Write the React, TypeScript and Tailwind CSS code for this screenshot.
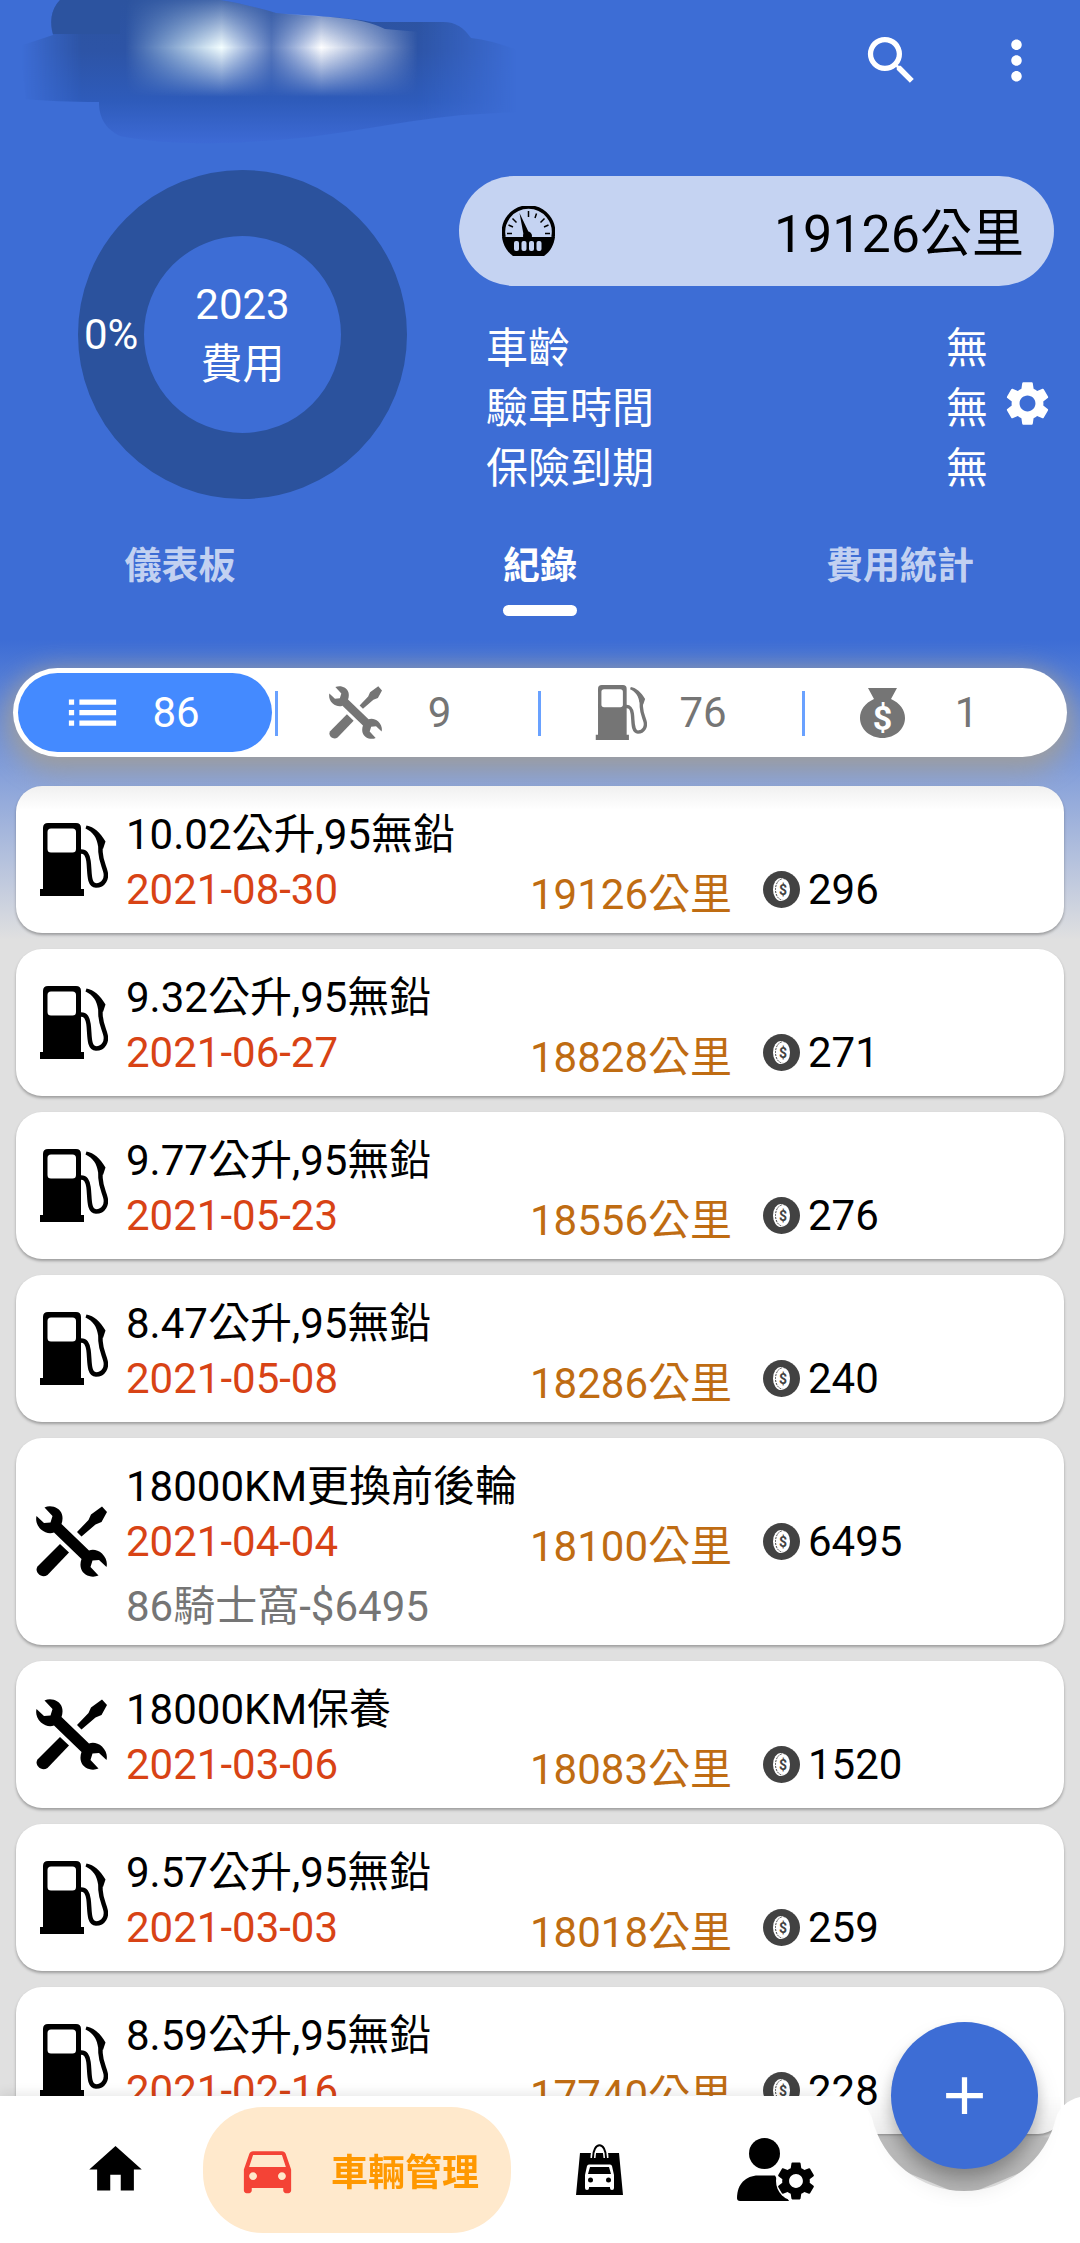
import React, { useState } from 'react';
import {
  MdAdd,
  MdDirectionsCar,
  MdHome,
  MdList,
  MdMoreVert,
  MdSearch,
  MdSettings,
} from 'react-icons/md';

type RecordType = 'fuel' | 'repair';

const records: {
  type: RecordType;
  title: string;
  date: string;
  km: string;
  price: string;
  note?: string;
}[] = [
  { type: 'fuel', title: '10.02公升,95無鉛', date: '2021-08-30', km: '19126公里', price: '296' },
  { type: 'fuel', title: '9.32公升,95無鉛', date: '2021-06-27', km: '18828公里', price: '271' },
  { type: 'fuel', title: '9.77公升,95無鉛', date: '2021-05-23', km: '18556公里', price: '276' },
  { type: 'fuel', title: '8.47公升,95無鉛', date: '2021-05-08', km: '18286公里', price: '240' },
  { type: 'repair', title: '18000KM更換前後輪', date: '2021-04-04', km: '18100公里', price: '6495', note: '86騎士窩-$6495' },
  { type: 'repair', title: '18000KM保養', date: '2021-03-06', km: '18083公里', price: '1520' },
  { type: 'fuel', title: '9.57公升,95無鉛', date: '2021-03-03', km: '18018公里', price: '259' },
  { type: 'fuel', title: '8.59公升,95無鉛', date: '2021-02-16', km: '17740公里', price: '228' },
];

const carInfo = [
  { label: '車齡', value: '無' },
  { label: '驗車時間', value: '無' },
  { label: '保險到期', value: '無' },
];

const tabs = ['儀表板', '紀錄', '費用統計'];

function PumpIcon({ className }: { className?: string }) {
  return (
    <svg viewBox="-5 0 73 73" className={className} fill="currentColor">
      <path
        fillRule="evenodd"
        d="M8 0H36Q41 0 41 5V66H44V73H0V66H3V5Q3 0 8 0ZM11 5.500Q7.500 5.500 7.500 9V26Q7.500 29.500 11 29.500H32.500Q36 29.500 36 26V9Q36 5.500 32.500 5.500Z"
      />
      <path
        d="M40 28.500C46 28 47.500 32 48.500 38C50 48 48 62 56 62.500C64 62.500 67 55 65.500 49C64 43 61 38 60.500 29C60.500 25 60.500 22 60 18"
        fill="none"
        stroke="currentColor"
        strokeWidth="4.500"
      />
      <path d="M46.500 2.500C54 4 60 9 65.500 18.500L63 26L58 23C57 15 53 9 45.500 5.500Z" />
    </svg>
  );
}

function ToolsIcon({ className }: { className?: string }) {
  return (
    <svg viewBox="0 0 71 71" className={className} fill="currentColor">
      <path d="M0.500 10L8 17L14.500 16.500L16.500 10L8.500 1.500C15 -1.500 24 1.500 26 8.500C27 12 26.500 15 25.500 18L53 44.500C57 43 62 44 66 47.500C70.500 52 71.500 57 70.500 61L63 54L56.500 54.500L54.500 61L62.500 69.500C56 72.500 47 69.500 45 62.500C44 59 44.500 56 45.500 53L18 26.500C14 28 9 27 5 23.500C0.500 19 -0.500 14 0.500 10Z" />
      <path d="M24 38L33 46.500L11.500 69C5 73 -2 66 1.500 60.500Z" />
      <path d="M41 26L52.500 14L55 8.500L66 0.500L71 6L65.500 16L59.500 18.500L45.500 30.500Z" />
    </svg>
  );
}

function MoneyBagIcon({ className }: { className?: string }) {
  return (
    <svg viewBox="0 0 45 50" className={className} fill="currentColor">
      <path d="M8 0H37L31 11C40 15 45 22 45 30C45 41 35 50 22.500 50S0 41 0 30C0 22 5 15 14 11Z" />
      <text x="22.500" y="42" textAnchor="middle" fontSize="34" fill="#fff" className="font-bold">
        $
      </text>
    </svg>
  );
}

function CoinIcon({ className }: { className?: string }) {
  return (
    <svg viewBox="0 0 37 37" className={className}>
      <circle cx="18.500" cy="18.500" r="18.500" fill="#424242" />
      <ellipse cx="18" cy="18.500" rx="8" ry="11.500" fill="#fff" />
      <ellipse cx="19.500" cy="18.500" rx="7" ry="10.500" fill="none" stroke="#424242" strokeWidth="1" strokeDasharray="2 1" />
      <ellipse cx="20.500" cy="18.500" rx="6.500" ry="10.500" fill="#fff" />
      <text x="20" y="23.500" textAnchor="middle" fontSize="14" fill="#424242" className="font-bold">
        $
      </text>
    </svg>
  );
}

function OdometerIcon({ className }: { className?: string }) {
  return (
    <svg viewBox="0 0 53 50" className={className}>
      <path d="M2 31A25 25 0 1 1 51 31" fill="none" stroke="#000" strokeWidth="3.500" />
      <path d="M0 31H53C52 38 49 45 42 50H11C4 45 1 38 0 31Z" />
      <path
        d="M5 27.500H10M43 27.500H48M6.500 19L11 21M46.500 19L42 21M10.500 12.500L14.500 16.500M42.500 12.500L38.500 16.500M34.500 7.500L33 12M26.500 5V11"
        stroke="#000"
        strokeWidth="1.500"
      />
      <path d="M17.500 7L28 29L22 31Z" />
      <circle cx="25.500" cy="30" r="4.500" />
      <g fill="#c5d3f2">
        <rect x="12" y="35" width="5" height="10" rx="2" />
        <rect x="19.500" y="35" width="5" height="10" rx="2" />
        <rect x="27" y="35" width="5" height="10" rx="2" />
        <rect x="34.500" y="35" width="5" height="10" rx="2" />
      </g>
    </svg>
  );
}

function CarBagIcon({ className }: { className?: string }) {
  return (
    <svg viewBox="0 0 47 51" className={className}>
      <path d="M4 9H43L47 51H0Z" />
      <path d="M17 14C17 -3 30 -3 30 14" fill="none" stroke="#fff" strokeWidth="5" />
      <path d="M17 14C17 -3 30 -3 30 14" fill="none" stroke="#000" strokeWidth="2" />
      <path
        fillRule="evenodd"
        fill="#fff"
        d="M13 20.500H34Q35.500 20.500 36 22L38 31V44Q38 46 36 46T34 44V43H13V44Q13 46 11 46T9 44V31L11 22Q11.500 20.500 13 20.500ZM14 23L12 30H35L33 23Z"
      />
      <circle cx="14.500" cy="36" r="2.500" />
      <circle cx="32.500" cy="36" r="2.500" />
    </svg>
  );
}

function UserGearIcon({ className }: { className?: string }) {
  return (
    <svg viewBox="0 0 78 63" className={className}>
      <circle cx="27.500" cy="15.500" r="15.500" />
      <path d="M0 60C0 46 9 37.500 21 37.500H38L52 63H3Q0 63 0 60Z" />
      <circle cx="59" cy="43" r="20" fill="#fff" />
      <MdSettings x="36" y="20" size={46} />
    </svg>
  );
}

/* Brushed-over account name in the app bar */
function HiddenName() {
  return (
    <svg viewBox="0 0 540 160" className="absolute left-0 top-0 h-[160px] w-[540px]" aria-hidden="true">
      <defs>
        <linearGradient id="brush" x1="0" y1="0" x2="0" y2="1">
          <stop offset="0" stopColor="#2c539f" />
          <stop offset="0.350" stopColor="#2d54a6" />
          <stop offset="0.700" stopColor="#2e5bba" />
          <stop offset="1" stopColor="#3d6ad5" />
        </linearGradient>
        <linearGradient id="sides" gradientUnits="userSpaceOnUse" x1="22" y1="0" x2="516" y2="0">
          <stop offset="0" stopColor="#000" />
          <stop offset="0.120" stopColor="#fff" />
          <stop offset="0.800" stopColor="#fff" />
          <stop offset="1" stopColor="#000" />
        </linearGradient>
        <linearGradient id="glowX" gradientUnits="userSpaceOnUse" x1="125" y1="0" x2="418" y2="0">
          <stop offset="0" stopColor="#dff" stopOpacity="0" />
          <stop offset="0.330" stopColor="#f4ffff" />
          <stop offset="0.500" stopColor="#dde8ff" stopOpacity="0.250" />
          <stop offset="0.670" stopColor="#fff" />
          <stop offset="1" stopColor="#fff" stopOpacity="0" />
        </linearGradient>
        <linearGradient id="glowY" gradientUnits="userSpaceOnUse" x1="0" y1="0" x2="0" y2="97">
          <stop offset="0" stopColor="#222" />
          <stop offset="0.490" stopColor="#fff" />
          <stop offset="1" stopColor="#000" />
        </linearGradient>
        <mask id="fadeSides">
          <rect width="540" height="160" fill="url(#sides)" />
        </mask>
        <mask id="fadeGlow">
          <rect width="540" height="97" fill="url(#glowY)" />
        </mask>
        <clipPath id="brushTop">
          <path d="M0 0H220C240 3 262 9 276 13C320 17 360 16 385 29L420 32V97H0Z" />
        </clipPath>
      </defs>
      <path
        mask="url(#fadeSides)"
        fill="url(#brush)"
        d="M60 0H220C240 3 262 9 276 13C310 17 340 16 372 22H443C456 22 464 28 471 38Q495 41 516 50V112L462 115C390 122 330 138 260 141C200 146 150 142 120 136C104 128 99 116 99 102C70 102 45 101 26 99L20 46L53 35C50 24 50 10 60 0Z"
      />
      <path d="M60 0H120V34H53C50 24 50 10 60 0Z" fill="#2c539f" />
      <g clipPath="url(#brushTop)">
        <rect x="125" width="293" height="97" fill="url(#glowX)" mask="url(#fadeGlow)" />
      </g>
    </svg>
  );
}

function RecordCard({ record }: { record: (typeof records)[number] }) {
  return (
    <li className="flex items-center rounded-[26px] bg-white shadow-[0_2px_3px_rgba(0,0,0,0.3)] first:bg-linear-to-b first:from-[#f0f0f0] first:to-white first:to-[24px]">
      <div className="flex w-[110px] shrink-0 justify-center">
        {record.type === 'fuel' ? <PumpIcon className="size-[73px]" /> : <ToolsIcon className="size-[71px]" />}
      </div>
      <div className="flex-1 pb-4 pt-[21px]">
        <h2 className="leading-[55px]">{record.title}</h2>
        <div className="grid h-[55px] grid-cols-[404fr_233fr_301fr] items-start leading-[55px]">
          <time className="text-[#d84315]">{record.date}</time>
          <span className="pt-[5px] text-[#bf6c12]">{record.km}</span>
          <span className="flex items-center gap-2">
            <CoinIcon className="size-[37px]" />
            {record.price}
          </span>
        </div>
        {record.note && <p className="mt-4 leading-[44px] text-[#757575]">{record.note}</p>}
      </div>
    </li>
  );
}

function BottomNav() {
  return (
    <nav className="fixed inset-x-0 bottom-0 h-[147px]">
      {/* bar with the notch for the add button */}
      <div className="absolute inset-0 flex">
        <div className="flex-1 bg-white shadow-[0_-4px_10px_rgba(0,0,0,0.08)]" />
        <svg viewBox="0 0 253 147" className="h-[147px] w-[253px]">
          <defs>
            <linearGradient id="notch" x1="0" y1="0" x2="0" y2="1">
              <stop offset="0" stopOpacity="0" />
              <stop offset="0.400" stopOpacity="0.060" />
              <stop offset="0.420" stopOpacity="0.150" />
              <stop offset="1" stopOpacity="0.180" />
            </linearGradient>
          </defs>
          <path d="M40 0H234V60L137 100L40 60Z" fill="url(#notch)" />
          <path
            d="M0 0C20 0 37 0 45 22A94.500 94.500 0 0 0 229 22C232 12 240 4 253 1V147H0Z"
            fill="#fff"
          />
        </svg>
      </div>

      <div className="relative flex h-full items-center pl-[84px]">
        <button aria-label="首頁">
          <MdHome className="size-[63px]" />
        </button>
        <button className="ml-14 flex h-[126px] w-[308px] items-center gap-8 rounded-[60px] bg-[#ffe9cc] pl-[33px] text-[37px] font-bold text-[#ff9800]">
          <MdDirectionsCar className="size-[63px] text-[#f44336]" />
          <span className="pt-2">車輛管理</span>
        </button>
        <button aria-label="商店" className="ml-[65px]">
          <CarBagIcon className="h-[51px] w-[47px]" />
        </button>
        <button aria-label="帳號設定" className="ml-[114px]">
          <UserGearIcon className="h-[63px] w-[78px]" />
        </button>
      </div>

      <button
        aria-label="新增"
        className="absolute -top-[74px] right-[42px] flex size-[147px] items-center justify-center rounded-full bg-[#3d6dd5] text-white shadow-[0_16px_26px_rgba(0,0,0,0.14),0_8px_14px_rgba(0,0,0,0.18)]"
      >
        <MdAdd className="size-[63px]" />
      </button>
    </nav>
  );
}

function App() {
  const [activeTab, setActiveTab] = useState('紀錄');
  const [activeFilter, setActiveFilter] = useState('all');

  const filters = [
    { id: 'all', count: 86, icon: <MdList className="size-[63px]" /> },
    { id: 'repair', count: 9, icon: <ToolsIcon className="size-[53px]" /> },
    { id: 'fuel', count: 76, icon: <PumpIcon className="size-[55px]" /> },
    { id: 'expense', count: 1, icon: <MoneyBagIcon className="h-[50px] w-[45px]" /> },
  ];

  return (
    <div className="min-h-screen bg-[#e0e0e0] bg-[linear-gradient(#3d6dd5_640px,#e0e0e0_940px)] pb-[108px] font-['Roboto','Noto_Sans_CJK_TC',sans-serif] text-[42px] leading-[60px] text-black">
      <header className="text-white">
        <div className="relative flex h-[120px] items-center justify-end gap-[62px] pr-8">
          <HiddenName />
          <button aria-label="搜尋">
            <MdSearch className="size-[63px]" />
          </button>
          <button aria-label="更多">
            <MdMoreVert className="size-[63px]" />
          </button>
        </div>

        <div className="mt-[50px] flex">
          <div className="w-[459px] shrink-0 pl-[78px]">
            <div className="relative flex size-[329px] flex-col items-center justify-center rounded-full border-[66px] border-[#2b529d]">
              <span>2023</span>
              <span>費用</span>
              <span className="absolute -left-[60px]">0%</span>
            </div>
          </div>
          <div className="mr-[26px] flex-1 pt-[6px]">
            <div className="flex h-[110px] items-center justify-between rounded-full bg-[#c5d3f2] pl-[43px] pr-[30px] text-[52px] text-black">
              <OdometerIcon className="h-[50px] w-[53px]" />
              <span className="pt-2">19126公里</span>
            </div>
            <div className="mt-[33px] flex items-center gap-[13px] pl-[27px]">
              <dl className="flex-1">
                {carInfo.map((item) => (
                  <div key={item.label} className="flex justify-between">
                    <dt>{item.label}</dt>
                    <dd>{item.value}</dd>
                  </div>
                ))}
              </dl>
              <button aria-label="設定" className="pb-3">
                <MdSettings className="size-[53px]" />
              </button>
            </div>
          </div>
        </div>

        <div className="mt-[38px] grid grid-cols-3 text-[37px] font-bold">
          {tabs.map((tab) => (
            <button
              key={tab}
              onClick={() => setActiveTab(tab)}
              className={`flex flex-col items-center ${activeTab === tab ? 'text-white' : 'text-white/70'}`}
            >
              {tab}
              {activeTab === tab && <span className="mt-2 h-[11px] w-[74px] rounded-full bg-white" />}
            </button>
          ))}
        </div>
      </header>

      <div className="mx-[13px] mt-[52px] grid h-[89px] grid-cols-4 rounded-full bg-white shadow-[0_8px_26px_6px_#9e9e9e]">
        {filters.map((filter, i) => (
          <div key={filter.id} className="relative flex p-[5px]">
            {i > 0 && <span className="absolute -left-[2px] top-[23px] h-[45px] w-[3px] bg-[#448aff]/80" />}
            <button
              onClick={() => setActiveFilter(filter.id)}
              className={`flex flex-1 items-center rounded-full pl-[18px] ${
                activeFilter === filter.id ? 'bg-[#448aff] text-white' : 'text-[#757575]'
              }`}
            >
              <span className="flex w-[112px] justify-center">{filter.icon}</span>
              <span className="w-[56px] text-center">{filter.count}</span>
            </button>
          </div>
        ))}
      </div>

      <ul className="relative mx-4 mt-[29px] flex flex-col gap-4">
        {records.map((record) => (
          <RecordCard key={record.date} record={record} />
        ))}
      </ul>

      <BottomNav />
    </div>
  );
}

export default App;
